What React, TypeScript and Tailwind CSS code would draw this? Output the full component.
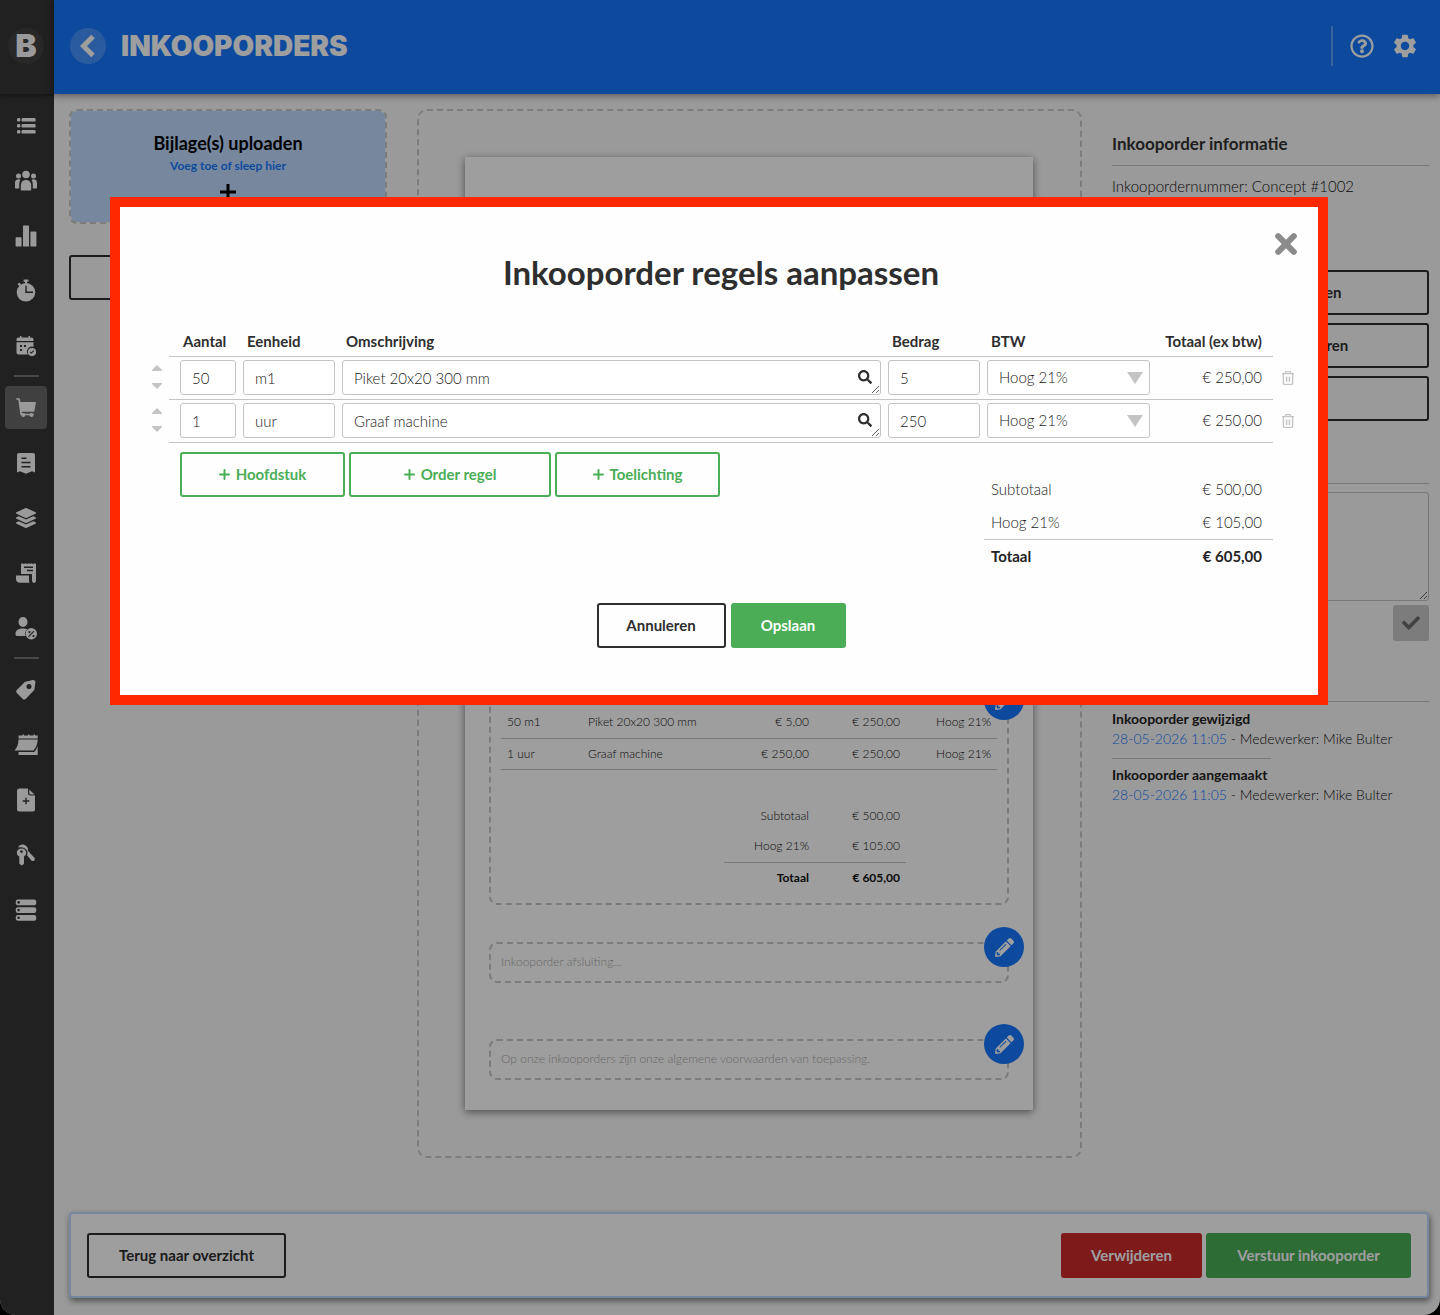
import type { ReactNode } from "react";
import { FaCheck, FaLayerGroup, FaPencilAlt, FaRegQuestionCircle, FaSearch } from "react-icons/fa";
import { MdSettings } from "react-icons/md";

type Line = {
  amount: string;
  unit: string;
  description: string;
  price: string;
  priceLabel: string;
  total: string;
};

const LINES: Line[] = [
  { amount: "50", unit: "m1", description: "Piket 20x20 300 mm", price: "5", priceLabel: "€ 5,00", total: "€ 250,00" },
  { amount: "1", unit: "uur", description: "Graaf machine", price: "250", priceLabel: "€ 250,00", total: "€ 250,00" },
];

const HISTORY = [
  { title: "Inkooporder gewijzigd", date: "28-05-2026 11:05", user: "Mike Bulter" },
  { title: "Inkooporder aangemaakt", date: "28-05-2026 11:05", user: "Mike Bulter" },
];

const FIELD = "block h-[35px] w-full rounded-[3px] border border-[#c4c4c4] bg-white px-[11px] text-[15px] font-light text-[#222]";
const OUTLINE = "flex h-[45px] items-center justify-center rounded-[3px] border-2 border-[#2e2e2e] text-[15px] font-bold text-[#2e2e2e]";

function Icon({ children }: { children: ReactNode }) {
  return (
    <svg width="24" height="24" viewBox="0 0 24 24" fill="currentColor">
      {children}
    </svg>
  );
}

const NAV_GROUPS: { label: string; active?: boolean; icon: ReactNode }[][] = [
  [
    {
      label: "Overzicht",
      icon: (
        <Icon>
          {[4, 10, 16].map((y) => (
            <g key={y}>
              <rect x="3" y={y} width="3.4" height="3.6" rx="1.4" />
              <rect x="7.6" y={y} width="14" height="3.6" rx="1.2" />
            </g>
          ))}
        </Icon>
      ),
    },
    {
      label: "Relaties",
      icon: (
        <Icon>
          <circle cx="12" cy="5.5" r="3.8" />
          <circle cx="4.5" cy="7" r="2.5" />
          <circle cx="19.5" cy="7" r="2.5" />
          <path d="M6.8 17c0-4 2-6 5.2-6s5.2 2 5.2 6v3.5c0 .6-.4 1-1 1H7.800c-.6 0-1-.4-1-1z" />
          <path d="M1 14c0-2.600 1.300-3.700 3.500-3.700.8 0 1.500.2 2 .5-.9 1.500-1.300 3.200-1.300 5.200v3.500H2c-.6 0-1-.4-1-1zM23 14c0-2.600-1.300-3.700-3.500-3.700-.8 0-1.500.2-2 .5.9 1.500 1.300 3.200 1.300 5.200v3.500H22c.6 0 1-.4 1-1z" />
        </Icon>
      ),
    },
    {
      label: "Statistieken",
      icon: (
        <Icon>
          <rect x="1.600" y="13.300" width="6" height="9.300" rx=".6" />
          <rect x="9" y="1.500" width="6" height="21.100" rx=".6" />
          <rect x="16.400" y="7.500" width="6" height="15.100" rx=".6" />
        </Icon>
      ),
    },
    {
      label: "Uren",
      icon: (
        <Icon>
          <rect x="9.500" y=".5" width="5" height="2.200" rx=".6" />
          <rect x="11" y="1" width="2" height="4" />
          <path d="M3.500 5.200l1.600-1.600 2 2-1.600 1.600z" />
          <path fillRule="evenodd" d="M12 4a9.300 9.300 0 1 0 0 18.600A9.300 9.300 0 0 0 12 4zm-.7 2.800h1.400v5.800h6.300v1.400h-7.700z" />
        </Icon>
      ),
    },
    {
      label: "Planning",
      icon: (
        <Icon>
          <path d="M2.500 5.500c0-1.200.8-2 2-2H6V2h1.500v1.500h7V2H16v1.500h1.500c1.200 0 2 .8 2 2V7h-17z" />
          <path fillRule="evenodd" d="M2.500 8.300h17v4.500a5 5 0 0 0-5.600 7.600H4.500c-1.200 0-2-.8-2-2zM6 11v2h2v-2zm4 0v2h2v-2zM6 15v2h2v-2z" />
          <path fillRule="evenodd" d="M18 14a4 4 0 1 0 0 8.200 4 4 0 0 0 0-8.200zm-.6 5.800-1.700-1.600.8-.8.9.8 2-2 .8.800z" />
        </Icon>
      ),
    },
  ],
  [
    {
      label: "Inkooporders",
      active: true,
      icon: (
        <Icon>
          <path d="M2.300 2.200H5c.5 0 .8.300.9.800L6.400 6H22l-1.500 8.800c-.1.600-.6 1-1.200 1H7.700l.3 2h11.500v1.500H7.200c-.4 0-.8-.3-.9-.8L4.300 3.800h-2z" />
          <circle cx="9.200" cy="19" r="2" />
          <circle cx="17.500" cy="19" r="2" />
        </Icon>
      ),
    },
    {
      label: "Facturen",
      icon: (
        <Icon>
          <path fillRule="evenodd" d="M5 2h14c1.100 0 2 .9 2 2v17.500l-3-1.200-3 1.200-3 1.200-3-1.200-3-1.200-3 1.200V4c0-1.100.9-2 2-2zm2.500 4.500V8h5V6.500zm0 4.200v1.500h9v-1.500zm0 4.200v1.500h9v-1.500z" />
        </Icon>
      ),
    },
    { label: "Producten", icon: <FaLayerGroup size={20} /> },
    {
      label: "Contracten",
      icon: (
        <Icon>
          <path fillRule="evenodd" d="M7 3l1.500-.7 1.500.7 1.500-.7 1.500.7 1.500-.7 1.500.7 1.500-.7 1.500.7 1.500-.7 1.500.7v16.500c0 1.500-.8 2.300-2 2.300s-2-.8-2-2.300V13H7zm3 2.500V7h9V5.500zm3 3.300v1.400h6V8.800z" />
          <path d="M2 14.500h13v5c0 1 .2 1.800.6 2.300H6c-2.600 0-4-1.600-4-4z" />
        </Icon>
      ),
    },
    {
      label: "Medewerkers",
      icon: (
        <Icon>
          <ellipse cx="9" cy="6" rx="4.500" ry="5" />
          <path d="M1.500 18c0-4 3-5.500 7.500-5.500 1.800 0 3.300.2 4.500.8a6 6 0 0 0-2 6.700H3c-1 0-1.500-.7-1.500-2z" />
          <path fillRule="evenodd" d="M17.300 12a5.700 5.700 0 1 0 0 11.400 5.700 5.700 0 0 0 0-11.400zm2.300 2.800.8.800-5.600 5.600-.8-.8zM15.500 15a1.100 1.100 0 1 1 0 2.200 1.100 1.100 0 0 1 0-2.200zm4 4a1.100 1.100 0 1 1 0 2.200 1.100 1.100 0 0 1 0-2.200z" />
        </Icon>
      ),
    },
  ],
  [
    {
      label: "Prijzen",
      icon: (
        <Icon>
          <path fillRule="evenodd" d="M12.500 3.400 18.800 2c1.400-.3 2.600.8 2.600 2.200L20.500 11c-.1.600-.4 1.200-.9 1.700l-8 8.200c-.8.800-2 .8-2.800 0l-6-6c-.8-.8-.8-2 0-2.800l8-8c.5-.4 1-.6 1.700-.7zM15 6a2.500 2.500 0 1 0 0 5 2.500 2.500 0 0 0 0-5z" />
        </Icon>
      ),
    },
    {
      label: "Agenda",
      icon: (
        <Icon>
          <path d="M4.500 2.500h4v-1h1.500v1h4v-1h1.500v1h4v-1H21v1h2.700v3H4.500z" />
          <path d="M4.500 6.500h19.200c0 4-1.500 8-4.200 11H.5c2.500-2.500 4-6.500 4-11z" />
          <path d="M23.700 13v9H4.500v-3h15.700c1.500-1.600 2.700-3.700 3.500-6z" />
        </Icon>
      ),
    },
    {
      label: "Nieuw document",
      icon: (
        <Icon>
          <path fillRule="evenodd" d="M5.500.5H14V5c0 1.500.8 2.500 2.500 2.500H21v14c0 1.200-.8 2-2 2H5.500c-1.500 0-2.500-.8-2.500-2V3C3 1.500 4 .5 5.500.5zm5.800 9.200v2.600H8.700v1.400h2.600v2.600h1.400v-2.600h2.600v-1.400h-2.600V9.700z" />
          <path d="M15.300 1.500 20.500 6.500h-4c-.8 0-1.200-.5-1.200-1.200z" />
        </Icon>
      ),
    },
    {
      label: "Sleutels",
      icon: (
        <Icon>
          <path fillRule="evenodd" d="M7.500 5.500c2.800 0 4.700 1.800 4.700 4.300 0 1.700-.9 3-2.200 3.700v7.300l-2 1.700-2.700-1.700v-7.200C3.800 12.900 2.800 11.500 2.800 9.800c0-2.500 2-4.300 4.700-4.300zm0 1.800a1.300 1.300 0 1 0 0 2.600 1.300 1.300 0 0 0 0-2.600z" />
          <path d="M4 4.500c1.500-3.500 6-3.800 8.500-1.300 1.400 1.300 1.800 3 1.400 4.500l7 7.500-.5 2.500-2.500.2-5-5.700c.7-1.400.8-3.200.1-4.700C11.700 4.800 8 3.500 4 4.500z" />
        </Icon>
      ),
    },
    {
      label: "Opslag",
      icon: (
        <Icon>
          {[1.5, 9.200, 16.900].map((y) => (
            <g key={y}>
              <rect x="1.800" y={y} width="20.400" height="5.800" rx="2" />
              <circle cx="4.600" cy={y + 2.900} r="1.300" fill="#363636" />
            </g>
          ))}
        </Icon>
      ),
    },
  ],
];

function Sidebar() {
  return (
    <aside className="flex w-[54px] shrink-0 flex-col bg-[#363636] text-[#f8f8f8]">
      <div className="flex h-[94px] items-center justify-center pr-0.5 pb-0.5 shadow-[0_1px_6px_rgba(0,0,0,0.5)]">
        <a href="#home" className="flex size-9 items-center justify-center rounded-full bg-[#414141] font-[Inter] text-[32px] leading-none font-black">
          B
        </a>
      </div>
      <nav className="pt-[10px]">
        {NAV_GROUPS.map((group, index) => (
          <div key={group[0].label}>
            {index > 0 && <div className="my-2 ml-[14px] h-[3px] w-[25px] border-t-2 border-[#747474]" />}
            <ul className="flex flex-col gap-3">
              {group.map((item) => (
                <li key={item.label} className="pl-[5px]">
                  <a
                    href="#nav"
                    aria-label={item.label}
                    className={
                      item.active
                        ? "flex h-[43px] w-[42px] items-center justify-center rounded-[4px] bg-[#686868]"
                        : "flex h-[43px] w-[42px] items-center justify-center"
                    }
                  >
                    {item.icon}
                  </a>
                </li>
              ))}
            </ul>
          </div>
        ))}
      </nav>
    </aside>
  );
}

function Header() {
  return (
    <header className="relative flex h-[94px] items-center justify-between bg-[#1578ff] pr-[21px] pb-0.5 pl-4 text-white shadow-[0_1px_8px_rgba(0,0,0,0.5)]">
      <div className="flex items-center gap-[15px]">
        <a href="#back" aria-label="Terug" className="flex size-9 items-center justify-center rounded-full bg-[#4493ff]">
          <svg width="18" height="24" viewBox="0 0 18 24" fill="none" stroke="currentColor" strokeWidth="5">
            <path d="M14 2.500 4.500 12l9.500 9.500" />
          </svg>
        </a>
        <h1 className="font-[Inter] text-[28px] leading-none font-black uppercase">Inkooporders</h1>
      </div>
      <div className="flex items-center gap-[17px]">
        <div className="h-10 w-0.5 bg-[#5ba0ff]" />
        <button type="button" aria-label="Help">
          <FaRegQuestionCircle size={24} />
        </button>
        <button type="button" aria-label="Instellingen">
          <MdSettings size={28} />
        </button>
      </div>
    </header>
  );
}

function EditButton({ label }: { label: string }) {
  return (
    <button
      type="button"
      aria-label={label}
      className="absolute -top-[17px] -right-[17px] flex size-10 items-center justify-center rounded-full bg-[#1578ff] text-white"
    >
      <FaPencilAlt size={19} />
    </button>
  );
}

function OrderDocument() {
  return (
    <section className="rounded-[10px] border-2 border-dashed border-[#c8c8c8] pt-[46px] pr-[47px] pb-[46px] pl-[46px]">
      <article className="bg-white px-6 pb-[30px] text-[12px] font-light text-[#111] shadow-[0_2px_8px_rgba(0,0,0,0.5)]">
        <div className="h-[538px]" />
        <div className="relative rounded-[8px] border-2 border-dashed border-[#c8c8c8] p-[10px]">
          <EditButton label="Regels aanpassen" />
          <table className="w-full table-fixed border-collapse">
            <colgroup>
              <col className="w-[81px]" />
              <col />
              <col className="w-[91px]" />
              <col className="w-[91px]" />
              <col className="w-[91px]" />
            </colgroup>
            <tbody>
              {LINES.map((line) => (
                <tr key={line.description} className="h-[31px] border-b border-[#c4c4c4]">
                  <td className="px-[6px]">
                    {line.amount} {line.unit}
                  </td>
                  <td className="px-[6px]">{line.description}</td>
                  <td className="px-[6px] text-right">{line.priceLabel}</td>
                  <td className="px-[6px] text-right">{line.total}</td>
                  <td className="px-[6px] text-right">Hoog 21%</td>
                </tr>
              ))}
              <tr className="h-[31px]">
                <td colSpan={5} />
              </tr>
              <tr className="h-[31px]">
                <td colSpan={2} />
                <td className="px-[6px] text-right">Subtotaal</td>
                <td className="px-[6px] text-right">€ 500,00</td>
                <td />
              </tr>
              <tr className="h-[31px]">
                <td colSpan={2} />
                <td className="border-b border-[#c4c4c4] px-[6px] text-right">Hoog 21%</td>
                <td className="border-b border-[#c4c4c4] px-[6px] text-right">€ 105,00</td>
                <td />
              </tr>
              <tr className="h-[31px] font-bold">
                <td colSpan={2} />
                <td className="px-[6px] text-right">Totaal</td>
                <td className="px-[6px] text-right">€ 605,00</td>
                <td />
              </tr>
            </tbody>
          </table>
        </div>
        <div className="relative mt-[37px] flex h-[41px] items-center rounded-[8px] border-2 border-dashed border-[#c8c8c8] px-[10px] pb-0.5 text-[#aaa]">
          <EditButton label="Afsluiting aanpassen" />
          Inkooporder afsluiting...
        </div>
        <div className="relative mt-14 flex h-[41px] items-center rounded-[8px] border-2 border-dashed border-[#c8c8c8] px-[10px] pb-0.5 text-[#aaa]">
          <EditButton label="Voorwaarden aanpassen" />
          Op onze inkooporders zijn onze algemene voorwaarden van toepassing.
        </div>
      </article>
    </section>
  );
}

function InfoColumn() {
  return (
    <section className="pt-6 text-[14px] font-light text-[#111]">
      <h2 className="border-b border-[#c4c4c4] pb-[10px] text-[17px] leading-[22px] font-bold text-[#333]">Inkooporder informatie</h2>
      <p className="mt-[10px] text-[15px] leading-5">Inkoopordernummer: Concept #1002</p>
      <div className="mt-[74px] flex flex-col gap-2">
        <button type="button" className={OUTLINE}>
          Inkooporder bekijken
        </button>
        <button type="button" className={OUTLINE}>
          Inkooporder dupliceren
        </button>
        <button type="button" aria-label="Meer acties" className={OUTLINE} />
      </div>
      <div className="mt-[62px] border-t border-[#c4c4c4] pt-2">
        <textarea aria-label="Notitie" className="block h-[109px] w-full rounded-[3px] border border-[#c4c4c4] bg-transparent" />
        <button type="button" aria-label="Notitie opslaan" className="mt-1 ml-auto flex size-9 items-center justify-center rounded-[3px] bg-[#c8c8c8] text-[#6b6b6b]">
          <FaCheck size={18} />
        </button>
      </div>
      <div className="mt-[60px] border-t border-[#c4c4c4] pt-[6px]">
        {HISTORY.map((entry, index) => (
          <div key={entry.title}>
            {index > 0 && <div className="mt-[9px] mb-[5px] w-1/2 border-t border-[#c4c4c4]" />}
            <h3 className="leading-[21px] font-bold text-[#222]">{entry.title}</h3>
            <p className="leading-5">
              <a href="#history" className="text-[#1578ff]">
                {entry.date}
              </a>{" "}
              - Medewerker: {entry.user}
            </p>
          </div>
        ))}
      </div>
    </section>
  );
}

function SortArrows() {
  return (
    <div className="flex flex-col items-center gap-[12px] pb-1 text-[#c4c4c4]">
      <button type="button" aria-label="Omhoog">
        <svg width="10" height="6" viewBox="0 0 10 6" fill="currentColor" className="block">
          <path d="M5 0l5 5v1H0V5z" />
        </svg>
      </button>
      <button type="button" aria-label="Omlaag">
        <svg width="10" height="6" viewBox="0 0 10 6" fill="currentColor" className="block">
          <path d="M5 6L0 1V0h10v1z" />
        </svg>
      </button>
    </div>
  );
}

function LineRow({ line }: { line: Line }) {
  const cell = "border-b border-[#c4c4c4] pt-[3px] pr-[3px] pb-1 pl-1";

  return (
    <tr>
      <td>
        <SortArrows />
      </td>
      <td className="border-b border-[#c4c4c4] pt-[3px] pr-[3px] pb-1 pl-[11px]">
        <input aria-label="Aantal" defaultValue={line.amount} className={FIELD} />
      </td>
      <td className={cell}>
        <input aria-label="Eenheid" defaultValue={line.unit} className={FIELD} />
      </td>
      <td className={cell}>
        <div className="relative">
          <textarea aria-label="Omschrijving" rows={1} defaultValue={line.description} className={`${FIELD} overflow-hidden pt-[7px] leading-5`} />
          <button type="button" aria-label="Zoeken" className="absolute top-[10px] right-[9px] text-[#2e2e2e]">
            <FaSearch size={14} />
          </button>
        </div>
      </td>
      <td className={cell}>
        <input aria-label="Bedrag" defaultValue={line.price} className={FIELD} />
      </td>
      <td className={cell}>
        <div className="relative">
          <select aria-label="BTW" className={`${FIELD} appearance-none`}>
            <option>Hoog 21%</option>
          </select>
          <svg width="16" height="12" viewBox="0 0 16 12" fill="#c4c4c4" className="pointer-events-none absolute top-3 right-[7px]">
            <path d="M0 0h16L8 12z" />
          </svg>
        </div>
      </td>
      <td className="border-b border-[#c4c4c4] pr-[11px] pb-0.5 text-right">{line.total}</td>
      <td className="pb-0.5 pl-[9px]">
        <button type="button" aria-label="Verwijder regel" className="block text-[#c4c4c4]">
          <svg width="12" height="14" viewBox="0 0 12 14" fill="none" stroke="currentColor" strokeWidth="1.400">
            <path d="M0 2.600h12M3.500 2.400V1.500c0-.5.3-.9.8-.9h3.400c.5 0 .8.400.8.900v.9M1.400 2.800v9.400c0 .7.400 1.200 1.100 1.200h7c.7 0 1.100-.5 1.100-1.200V2.800M4.600 5.500v5.500M7.400 5.500v5.500" />
          </svg>
        </button>
      </td>
    </tr>
  );
}

function AddButton({ children, wide }: { children: ReactNode; wide?: boolean }) {
  return (
    <button
      type="button"
      className={`flex h-[45px] items-center justify-center gap-[6px] rounded-[3px] border-2 border-[#4bae57] text-[15px] font-bold text-[#4bae57] ${wide ? "w-[202px]" : "w-[165px]"}`}
    >
      <svg width="11" height="11" viewBox="0 0 11 11" stroke="currentColor" strokeWidth="2" strokeLinecap="round">
        <path d="M5.500 1v9M1 5.500h9" />
      </svg>
      {children}
    </button>
  );
}

function LinesDialog() {
  return (
    <div
      role="dialog"
      aria-modal="true"
      aria-labelledby="dialog-title"
      className="relative w-full border-[10px] border-[#ff2800] bg-[#fefefe] pr-[15px] pb-[47px] pl-[25px] text-[15px] font-light text-[#222]"
    >
      <button type="button" aria-label="Sluiten" className="absolute top-[26px] right-[21px] text-[#8b8b8b]">
        <svg width="22" height="22" viewBox="0 0 22 22" stroke="currentColor" strokeWidth="6" strokeLinecap="round">
          <path d="M3.200 3.200l15.600 15.600M18.800 3.200L3.200 18.800" />
        </svg>
      </button>
      <h2 id="dialog-title" className="pt-[45px] pr-[6px] pb-[39px] text-center text-[33px] leading-10 font-bold text-[#2e2e2e]">
        Inkooporder regels aanpassen
      </h2>
      <table className="w-full table-fixed border-separate border-spacing-0">
        <colgroup>
          <col className="w-6" />
          <col className="w-[70px]" />
          <col className="w-[99px]" />
          <col />
          <col className="w-[99px]" />
          <col className="w-[170px]" />
          <col className="w-[120px]" />
          <col className="w-[30px]" />
        </colgroup>
        <thead>
          <tr className="text-left leading-5 text-[#2e2e2e]">
            <td />
            <th className="border-b border-[#c4c4c4] pb-[5px] pl-[14px]">Aantal</th>
            <th className="border-b border-[#c4c4c4] pb-[5px] pl-2">Eenheid</th>
            <th className="border-b border-[#c4c4c4] pb-[5px] pl-2">Omschrijving</th>
            <th className="border-b border-[#c4c4c4] pb-[5px] pl-2">Bedrag</th>
            <th className="border-b border-[#c4c4c4] pb-[5px] pl-2">BTW</th>
            <th className="border-b border-[#c4c4c4] pr-[11px] pb-[5px] text-right">Totaal (ex btw)</th>
            <td />
          </tr>
        </thead>
        <tbody>
          {LINES.map((line) => (
            <LineRow key={line.description} line={line} />
          ))}
        </tbody>
      </table>
      <div className="flex justify-between pr-[30px] pl-[35px]">
        <div className="flex gap-1 pt-[9px]">
          <AddButton>Hoofdstuk</AddButton>
          <AddButton wide>Order regel</AddButton>
          <AddButton>Toelichting</AddButton>
        </div>
        <table className="mt-[29px] w-[289px] border-separate border-spacing-0">
          <tbody>
            <tr className="h-[34px]">
              <td className="pl-[7px]">Subtotaal</td>
              <td className="pr-[11px] text-right">€ 500,00</td>
            </tr>
            <tr className="h-[34px]">
              <td className="border-b border-[#c4c4c4] pl-[7px]">Hoog 21%</td>
              <td className="border-b border-[#c4c4c4] pr-[11px] text-right">€ 105,00</td>
            </tr>
            <tr className="h-[33px] font-bold">
              <td className="pl-[7px]">Totaal</td>
              <td className="pr-[11px] text-right">€ 605,00</td>
            </tr>
          </tbody>
        </table>
      </div>
      <div className="mt-[30px] flex justify-center gap-[5px] pr-[6px]">
        <button type="button" className={`${OUTLINE} w-[129px]`}>
          Annuleren
        </button>
        <button type="button" className="h-[45px] w-[115px] rounded-[3px] bg-[#4bae57] text-[15px] font-bold text-white">
          Opslaan
        </button>
      </div>
    </div>
  );
}

export default function App() {
  return (
    <div className="bg-black font-[Lato,sans-serif]">
      <div className="flex min-h-screen overflow-hidden rounded-b-[16px] bg-[#f9f9f9]">
        <Sidebar />
        <div className="flex min-w-0 flex-1 flex-col">
          <Header />
          <main className="flex flex-1 flex-col pt-[15px] pr-[11px] pb-[17px] pl-[15px]">
            <div className="grid grid-cols-[318px_minmax(0,1fr)_317px] items-start gap-[30px]">
              <section>
                <button
                  type="button"
                  className="flex h-[115px] w-full flex-col items-center rounded-[8px] border-2 border-dashed border-[#c8c8c8] bg-[#c0dcff] bg-clip-padding pt-5 text-black"
                >
                  <span className="text-[18px] leading-6 font-bold">Bijlage(s) uploaden</span>
                  <span className="text-[12px] leading-[22px] font-bold text-[#1578ff]">Voeg toe of sleep hier</span>
                  <svg width="16" height="16" viewBox="0 0 16 16" stroke="currentColor" strokeWidth="3" className="mt-[7px]">
                    <path d="M8 0v16M0 8h16" />
                  </svg>
                </button>
                <button type="button" className={`${OUTLINE} mt-[31px] w-full`}>
                  Bijlagen
                </button>
              </section>
              <OrderDocument />
              <InfoColumn />
            </div>
            <footer className="mt-auto flex h-[86px] items-center justify-between rounded-[4px] border-2 border-[#c0dcff] bg-white px-4 shadow-[1px_3px_6px_rgba(0,0,0,0.5)]">
              <a href="#overzicht" className={`${OUTLINE} w-[199px]`}>
                Terug naar overzicht
              </a>
              <div className="flex gap-1">
                <button type="button" className="h-[45px] w-[141px] rounded-[3px] bg-[#cc2b2b] text-[15px] font-bold text-white">
                  Verwijderen
                </button>
                <button type="button" className="h-[45px] w-[205px] rounded-[3px] bg-[#4bae57] text-[15px] font-bold text-white">
                  Verstuur inkooporder
                </button>
              </div>
            </footer>
          </main>
        </div>
      </div>
      {/* Overlay */}
      <div className="fixed inset-0 flex items-start bg-black/38 pt-[197px] pr-[112px] pl-[110px]">
        <LinesDialog />
      </div>
    </div>
  );
}
